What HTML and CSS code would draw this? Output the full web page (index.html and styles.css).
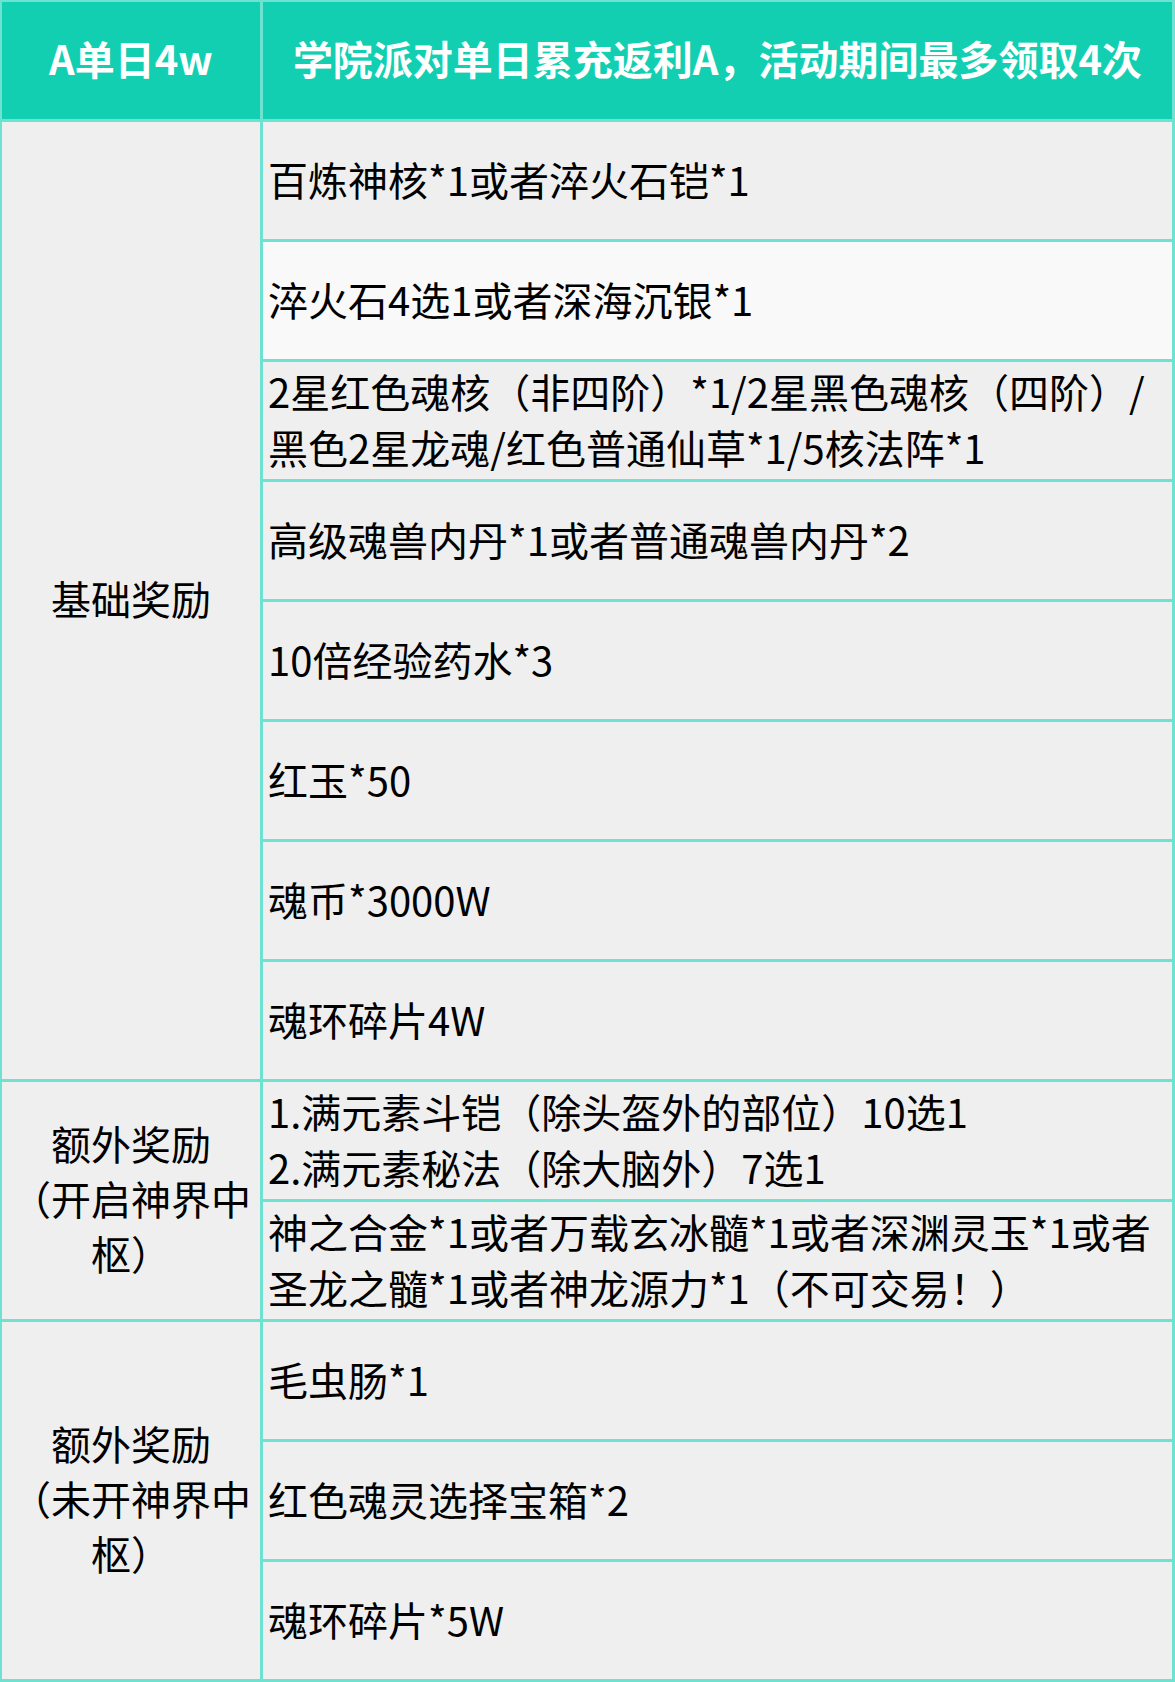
FILE: index.html
```html
<!DOCTYPE html>
<html lang="zh-CN">
<head>
<meta charset="utf-8">
<title>A单日4w</title>
<link rel="stylesheet" href="styles.css">
</head>
<body>
<div class="table">
  <div class="cell head left r1">A单日4w</div>
  <div class="cell head right r1">学院派对单日累充返利A，活动期间最多领取4次</div>

  <div class="cell label span8">基础奖励</div>
  <div class="cell item">百炼神核*1或者淬火石铠*1</div>
  <div class="cell item light">淬火石4选1或者深海沉银*1</div>
  <div class="cell item">2星红色魂核（非四阶）*1/2星黑色魂核（四阶）/<br>黑色2星龙魂/红色普通仙草*1/5核法阵*1</div>
  <div class="cell item">高级魂兽内丹*1或者普通魂兽内丹*2</div>
  <div class="cell item">10倍经验药水*3</div>
  <div class="cell item">红玉*50</div>
  <div class="cell item">魂币*3000W</div>
  <div class="cell item">魂环碎片4W</div>

  <div class="cell label span2">额外奖励<br>（开启神界中<br>枢）</div>
  <div class="cell item">1.满元素斗铠（除头盔外的部位）10选1<br>2.满元素秘法（除大脑外）7选1</div>
  <div class="cell item">神之合金*1或者万载玄冰髓*1或者深渊灵玉*1或者<br>圣龙之髓*1或者神龙源力*1（不可交易！）</div>

  <div class="cell label span3">额外奖励<br>（未开神界中<br>枢）</div>
  <div class="cell item">毛虫肠*1</div>
  <div class="cell item">红色魂灵选择宝箱*2</div>
  <div class="cell item">魂环碎片*5W</div>
</div>
</body>
</html>
```
FILE: styles.css
```css
html, body {
  margin: 0;
  padding: 0;
  background: #6ee2d0;
}
body {
  width: 1175px;
  height: 1682px;
  font-family: "Noto Sans CJK SC", "Noto Sans", sans-serif;
  color: #000;
}
.table {
  box-sizing: border-box;
  width: 1175px;
  height: 1682px;
  padding: 2px 3px 3px 2px;
  background: #6ee2d0;
  display: grid;
  grid-template-columns: 258px 909px;
  grid-template-rows: repeat(14, 117px);
  gap: 3px;
}
.cell {
  box-sizing: border-box;
  background: #efefef;
  display: flex;
  align-items: center;
  font-size: 40px;
  line-height: 56px;
  padding-bottom: 4px;
}
.head {
  background: #13cfb2;
  color: #fff;
  font-weight: 700;
  justify-content: center;
  text-align: center;
  padding-bottom: 6px;
}
.head.left { grid-column: 1; }
.head.right { grid-column: 2; }
.label {
  grid-column: 1;
  justify-content: center;
  text-align: center;
  line-height: 55px;
}
.span8 { grid-row: span 8; }
.span2 { grid-row: span 2; }
.span3 { grid-row: span 3; }
.item {
  grid-column: 2;
  padding-left: 5px;
  white-space: nowrap;
}
.light { background: #f9f9f9; }
```
